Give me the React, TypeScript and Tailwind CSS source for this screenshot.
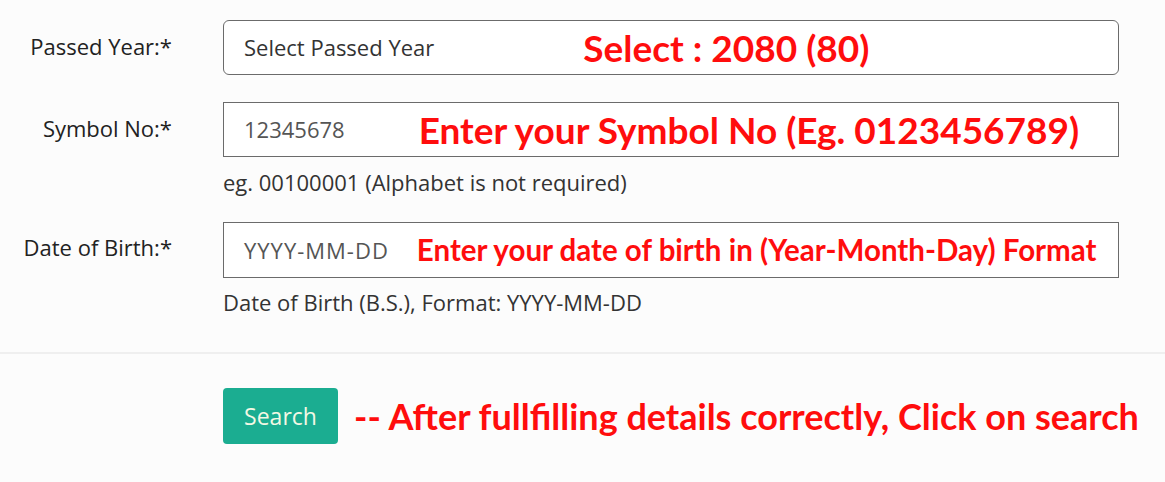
const label = "text-right text-[22px] text-[#222] w-[172px] shrink-0";
const note = "font-['Lato'] font-bold text-[#ff0d0d] leading-none whitespace-nowrap";

export default function App() {
	return (
		<div className="min-h-[482px] w-[1165px] bg-[#fcfcfc] font-['Open_Sans',sans-serif] overflow-hidden">
			<div className="pt-[20px]">
				{/* Passed Year */}
				<div className="flex">
					<div className={`${label} pt-[10px]`}>Passed Year:*</div>
					<div className="ml-[51px] flex h-[55px] w-[896px] items-center rounded-[6px] border border-[#6b6b6b] bg-white pl-[20px]">
						<span className="text-[22px] text-[#333]">Select Passed Year</span>
						<span className={`${note} ml-[149px] text-[37px]`}>Select : 2080 (80)</span>
					</div>
				</div>

				{/* Symbol No */}
				<div className="mt-[27px] flex">
					<div className={`${label} pt-[10px]`}>Symbol No:*</div>
					<div className="ml-[51px] w-[896px]">
						<div className="flex h-[55px] items-center border border-[#6b6b6b] bg-white pl-[20px]">
							<span className="text-[22px] text-[#555]">12345678</span>
							<span className={`${note} ml-[74px] text-[37px]`}>Enter your Symbol No (Eg. 0123456789)</span>
						</div>
						<p className="mt-[11px] text-[22px] leading-[28px] text-[#333]">
							eg. 00100001 (Alphabet is not required)
						</p>
					</div>
				</div>

				{/* Date of Birth */}
				<div className="mt-[26px] flex">
					<div className={`${label} pt-[9px]`}>Date of Birth:*</div>
					<div className="ml-[51px] w-[896px]">
						<div className="flex h-[56px] items-center border border-[#6b6b6b] bg-white pl-[20px]">
							<span className="text-[22px] tracking-[1px] text-[#555]">YYYY-MM-DD</span>
							<span className={`${note} ml-[28px] text-[29.5px]`}>
								Enter your date of birth in (Year-Month-Day) Format
							</span>
						</div>
						<p className="mt-[10px] text-[22px] leading-[28px] text-[#333]">
							Date of Birth (B.S.), Format: YYYY-MM-DD
						</p>
					</div>
				</div>
			</div>

			<div className="mt-[36px] h-[2px] bg-[#efefef]" />

			<div className="mt-[34px] flex items-center pl-[223px]">
				<button className="h-[56px] w-[115px] rounded-[4px] bg-[#1bad91] text-[23px] text-[#f3f8e4]">
					Search
				</button>
				<span className={`${note} ml-[16px] text-[36px]`}>
					-- After fullfilling details correctly, Click on search
				</span>
			</div>
		</div>
	);
}
